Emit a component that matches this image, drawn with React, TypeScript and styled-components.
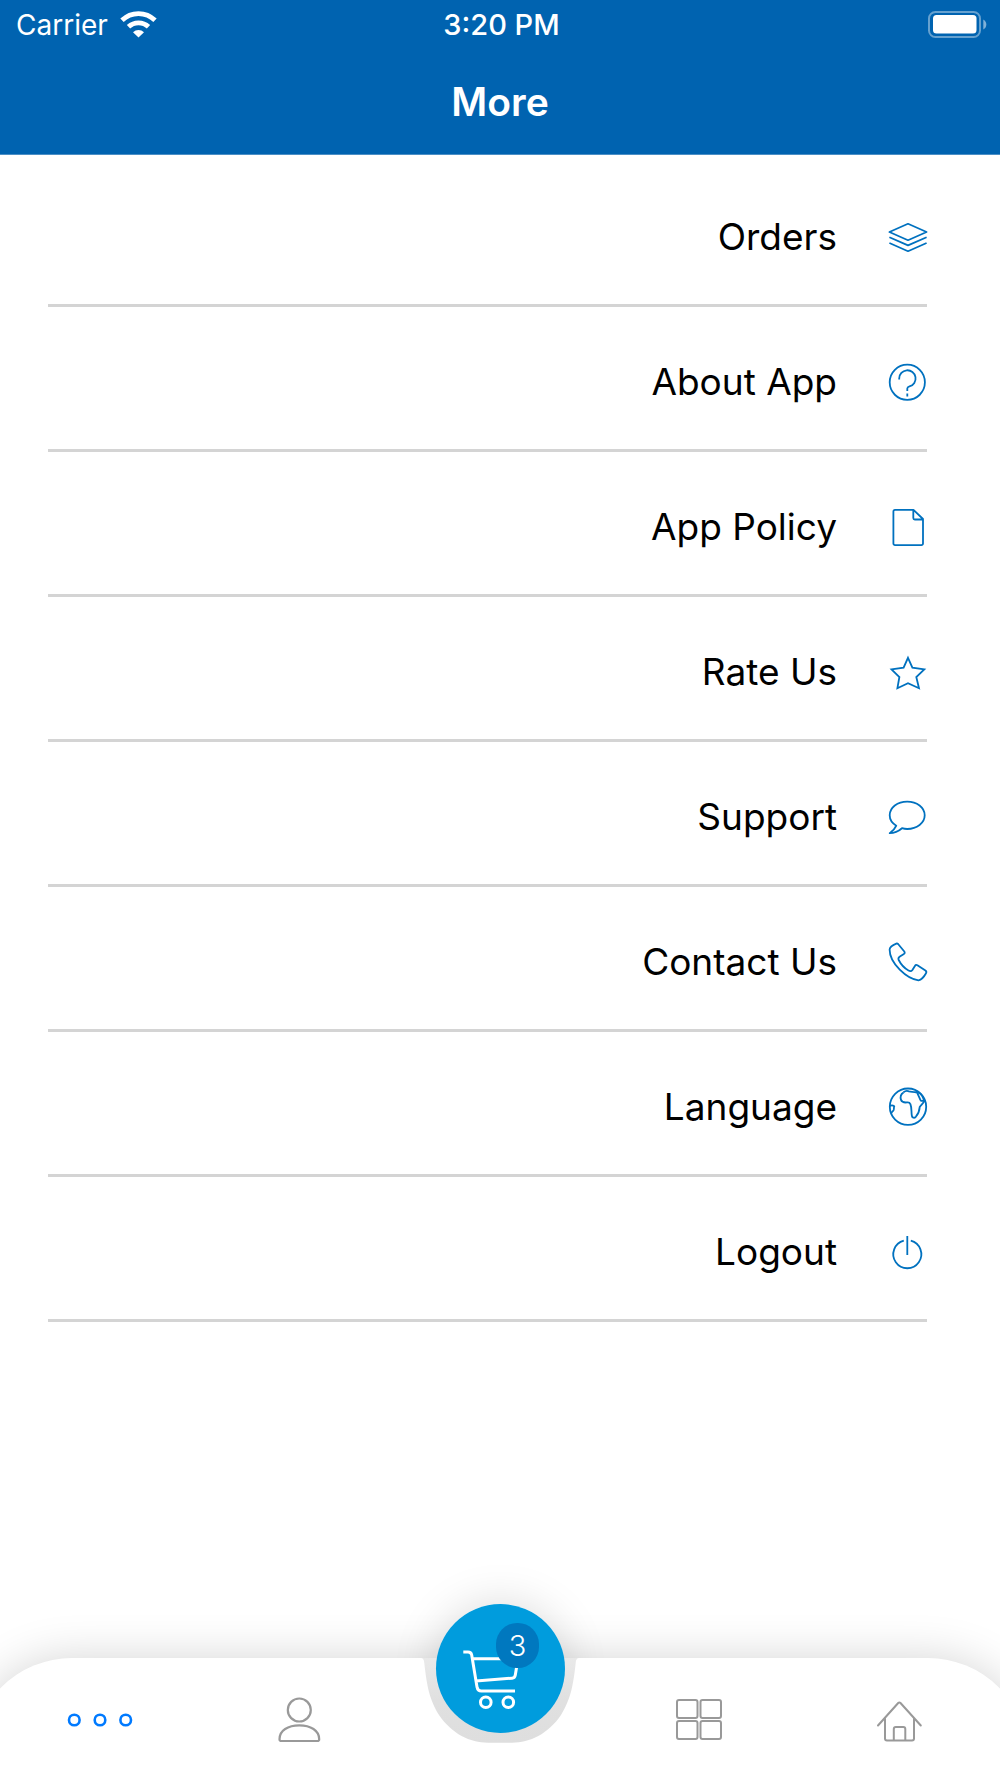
import React from "react";
import styled, { createGlobalStyle } from "styled-components";

const GlobalStyle = createGlobalStyle`
  *, *::before, *::after { box-sizing: border-box; }
  body {
    margin: 0;
    background: #fff;
    color: #000;
    font-family: Inter, "Liberation Sans", sans-serif;
  }
`;

const Screen = styled.div`
  position: relative;
  display: flex;
  flex-direction: column;
  min-height: 100vh;
  overflow: hidden;
  background: #fff;
`;

const Header = styled.header`
  background: #0063b0;
  color: #fff;
  border-bottom: 1px solid #4b8fc6;
`;

const StatusBar = styled.div`
  display: grid;
  grid-template-columns: 1fr auto 1fr;
  align-items: center;
  height: 50px;
  padding: 0 13px 0 16px;
  font-size: 28px;
  line-height: 36px;
`;

const Carrier = styled.div`
  display: flex;
  align-items: center;
  gap: 12px;
`;

const Clock = styled.time`
  font-size: 29px;
  font-weight: 500;
`;

const BatteryIcon = styled.svg`
  justify-self: end;
`;

const Title = styled.h1`
  margin: 0;
  height: 104px;
  font-size: 39px;
  font-weight: 600;
  line-height: 104px;
  text-align: center;
`;

const Menu = styled.ul`
  list-style: none;
  margin: 0;
  padding: 7px 73px 160px 48px;
`;

const MenuRow = styled.a`
  display: flex;
  align-items: center;
  justify-content: flex-end;
  gap: 52px;
  height: 145px;
  padding-top: 8px;
  border-bottom: 3px solid #d4d4d4;
  color: #000;
  font-size: 37px;
  line-height: 48px;
  text-decoration: none;
`;

const MenuIcon = styled.svg`
  flex: none;
  width: 38px;
  height: 38px;
  overflow: visible;
  fill: none;
  stroke: #0071bf;
  stroke-width: 1.8;
  stroke-linejoin: round;
`;

const TabBar = styled.nav`
  position: relative;
  margin: auto -28px 0;
`;

const CartHalo = styled.div`
  position: absolute;
  left: calc(50% - 64px);
  top: -54px;
  width: 129px;
  height: 129px;
  border-radius: 50%;
  box-shadow: 0 0 45px rgba(0, 0, 0, 0.15);
`;

const TabSurface = styled.div`
  position: relative;
  display: grid;
  grid-template-columns: repeat(5, 1fr);
  height: 120px;
  padding: 4px 28px 0;
  border-radius: 100px 100px 0 0;
  background: #fff;
  box-shadow: 0 0 45px rgba(0, 0, 0, 0.17);
`;

const Tab = styled.button<{ $active?: boolean }>`
  display: flex;
  align-items: center;
  justify-content: center;
  padding: 0;
  border: 0;
  background: none;
  color: ${(p) => (p.$active ? "#007aff" : "#999")};
`;

const TabIcon = styled.svg<{ $stroke?: number }>`
  height: 48px;
  overflow: visible;
  fill: none;
  stroke: currentColor;
  stroke-width: ${(p) => p.$stroke ?? 2};
  stroke-linejoin: round;
  stroke-linecap: round;
`;

const Notch = styled.svg`
  position: absolute;
  left: calc(50% - 80px);
  top: 0;
  width: 160px;
  height: 86px;
`;

const CartButton = styled.button`
  position: absolute;
  left: calc(50% - 64px);
  top: -54px;
  width: 129px;
  height: 129px;
  padding: 0;
  border: 0;
  border-radius: 50%;
  background: #009cdd;
  color: #fff;
  font-family: inherit;
`;

const CartIcon = styled.svg`
  display: block;
  width: 129px;
  height: 129px;
  fill: none;
  stroke: #fff;
  stroke-width: 3;
  stroke-linejoin: round;
`;

const Badge = styled.span`
  position: absolute;
  left: 60px;
  top: 19px;
  width: 43px;
  height: 45px;
  border-radius: 21px;
  background: #0078bf;
  font-size: 29px;
  font-weight: 300;
  line-height: 45px;
  text-align: center;
`;

const menu = [
  {
    label: "Orders",
    icon: (
      <>
        <path d="M19 5.8 37.6 14 19 22.2.4 14Z" />
        <path d="M.4 19.2 19 27.4l18.6-8.2M.4 25 19 33.2 37.6 25" />
      </>
    ),
  },
  {
    label: "About App",
    icon: (
      <>
        <circle cx="18.3" cy="19.3" r="17.6" />
        <path d="M10.2 16.4v-.9a8.2 8.2 0 1 1 10.3 7.9c-1.5.4-2.2 1-2.2 2.2V28M18.3 30.5v3" />
      </>
    ),
  },
  {
    label: "App Policy",
    icon: (
      <path d="M6 1.8h18.5L34 11v24.5a1.6 1.6 0 0 1-1.6 1.6H6a1.6 1.6 0 0 1-1.6-1.6V3.4A1.6 1.6 0 0 1 6 1.8ZM24.3 1.8v8.2a1.5 1.5 0 0 0 1.5 1.5H34" />
    ),
  },
  {
    label: "Rate Us",
    icon: (
      <path
        strokeLinejoin="miter"
        d="M19 4.8 23.4 14.7 35.3 16.3 27.3 24 30 35.2 19 30.2 8.4 35.2 10.4 24 2.5 16.3 14.6 14.7Z"
      />
    ),
  },
  {
    label: "Support",
    icon: (
      <path d="M7.3 27.7C2.7 25 .7 21.4.7 17.3.7 9.6 8.5 3.6 18.2 3.6s17.5 6 17.5 13.7S27.9 31 18.2 31c-2 0-3.6-.3-5.2-.8-3.8 3.3-7.7 4.9-12.3 5 2.9-2 5.4-4.6 6.6-7.5Z" />
    ),
  },
  {
    label: "Contact Us",
    icon: (
      <path d="M7.3.6c.8-.3 1.4 0 2 .6l6 7.3c.7.9.5 1.7-.4 2.4l-4 2.6c-1.500 1-1.900 2-1.200 3.500 2.400 4.700 5.300 8 9.800 10.500 1.700 1 2.900.8 3.900-.6l2.500-4c.6-1 1.500-1.200 2.500-.6l8 5.300c1.100.8 1.300 1.500.6 2.600-1.900 3.500-4.500 6.500-7.500 7.100C18 36 .6 20.400.6 6.500.8 4.200 4.500 1.700 7.300.6Z" />
    ),
  },
  {
    label: "Language",
    icon: (
      <>
        <circle cx="19" cy="18.7" r="18.2" />
        <path d="M14.5 4.2c1.500-1.200 3.800-1.600 5.500-.9 2.300.8 4 .2 6 .9 1.500.6 2.600.4 3.700.8M27.500 2.900c1.500 4.200 3 6.800 4.200 9.600.9.7 2 .6 4 .1-1.700 2.900-3.600 4.400-5 6.500-.2 3.800-1.700 7-3.900 9.700-1.300 1.400-3.500 1.300-3.900-.8-.9-4.300.2-7.500-1.500-11.800-.6-1.700-1.900-2-3.400-1.800-2.600.3-5.200-.4-6-2.500-1-3.300.3-6.100 2.500-7.500M29.500 4.200c2.500 1.700 4.800 5 5.500 8.400M.8 18c1.600-.8 3.400-.5 4.500.2-.7 1.400-.1 2.600-.7 3.900-.6 1.200-1.800 1.700-2.300 3.200" />
      </>
    ),
  },
  {
    label: "Logout",
    icon: <path d="M14.8 7.7a14 14 0 1 0 7 0M18.3 3v19" />,
  },
];

export default function App() {
  return (
    <Screen>
      <GlobalStyle />
      <Header>
        <StatusBar>
          <Carrier>
            Carrier
            <svg width="37" height="30" viewBox="0 0 37 30" fill="none" aria-label="Wi-Fi">
              <path d="M2 10.3a23.500 23.500 0 0 1 33 0M8.500 16.800a14.500 14.500 0 0 1 20 0" stroke="#fff" strokeWidth="4.800" />
              <path d="M13 22.200a8 8 0 0 1 11 0L18.500 27.500Z" fill="#fff" />
            </svg>
          </Carrier>
          <Clock>3:20 PM</Clock>
          <BatteryIcon width="59" height="28" viewBox="0 0 59 28" fill="none" aria-label="Battery full">
            <rect x="1" y="1" width="51" height="25" rx="6.500" stroke="#fff" strokeOpacity=".4" strokeWidth="2" />
            <rect x="5" y="4" width="43.500" height="18.500" rx="3.500" fill="#fff" />
            <path d="M55.300 8.500c4 2 4 8 0 10Z" fill="#fff" fillOpacity=".5" />
          </BatteryIcon>
        </StatusBar>
        <Title>More</Title>
      </Header>

      <main>
        <Menu>
          {menu.map((item) => (
            <li key={item.label}>
              <MenuRow href="#">
                {item.label}
                <MenuIcon viewBox="0 0 38 38" aria-hidden="true">
                  {item.icon}
                </MenuIcon>
              </MenuRow>
            </li>
          ))}
        </Menu>
      </main>

      <TabBar aria-label="Main">
        <CartHalo />
        <TabSurface>
          <Tab $active aria-label="More">
            <TabIcon width="68" viewBox="0 0 68 48" $stroke={2.6}>
              <circle cx="8.300" cy="24" r="5.300" />
              <circle cx="34" cy="24" r="5.300" />
              <circle cx="59.700" cy="24" r="5.300" />
            </TabIcon>
          </Tab>
          <Tab aria-label="Profile">
            <TabIcon width="48" viewBox="0 0 48 48" $stroke={2.2}>
              <circle cx="23.300" cy="14" r="11.500" />
              <path d="M5.200 45a1.700 1.700 0 0 1-1.700-1.800C3.500 34.500 12 29.400 23.300 29.400S43.200 34.500 43.200 43.200A1.700 1.700 0 0 1 41.500 45Z" />
            </TabIcon>
          </Tab>
          <span />
          <Tab aria-label="Categories">
            <TabIcon width="48" viewBox="0 0 48 48">
              <rect x="1" y="4" width="20.500" height="18" rx="2" />
              <rect x="24.500" y="4" width="20.500" height="18" rx="2" />
              <rect x="1" y="25" width="20.500" height="18" rx="2" />
              <rect x="24.500" y="25" width="20.500" height="18" rx="2" />
            </TabIcon>
          </Tab>
          <Tab aria-label="Home">
            <TabIcon width="48" viewBox="0 0 48 48">
              <path d="M2 29.500 22.200 7c.8-.8 1.500-.8 2.300 0L44.800 29.500M9 22.500V42.500a2 2 0 0 0 2 2H36a2 2 0 0 0 2-2V22.500M17.800 44V33a2 2 0 0 1 2-2h7.500a2 2 0 0 1 2 2V44" />
            </TabIcon>
          </Tab>
        </TabSurface>
        <Notch viewBox="0 0 160 86" aria-hidden="true">
          <defs>
            <linearGradient id="notchShade" x1="0" y1="0" x2="0" y2="1">
              <stop offset="0" stopColor="#e9e9e9" />
              <stop offset=".5" stopColor="#e0e0e0" />
              <stop offset="1" stopColor="#dedede" />
            </linearGradient>
          </defs>
          <path
            d="M0 0C3.500 0 4 2 4.300 5 7 30 10 42 19 57 32 76 50 84.700 68 84.700H92C110 84.700 128 76 141 57 150 42 153 30 155.700 5 156 2 156.500 0 160 0Z"
            fill="url(#notchShade)"
          />
        </Notch>
        <CartButton aria-label="Cart, 3 items">
          <CartIcon viewBox="0 0 129 129" aria-hidden="true">
            <path d="M27.300 48H32c2 0 3.300 1 3.700 3L41 83c.5 2.700 1.700 4 4.300 4H79M36.300 54.700H82L79.300 71c-.3 2-1.200 3-3.300 3.200L40 77" />
            <circle cx="49.800" cy="98.300" r="5.300" />
            <circle cx="72.300" cy="98.300" r="5.300" />
          </CartIcon>
          <Badge>3</Badge>
        </CartButton>
      </TabBar>
    </Screen>
  );
}
